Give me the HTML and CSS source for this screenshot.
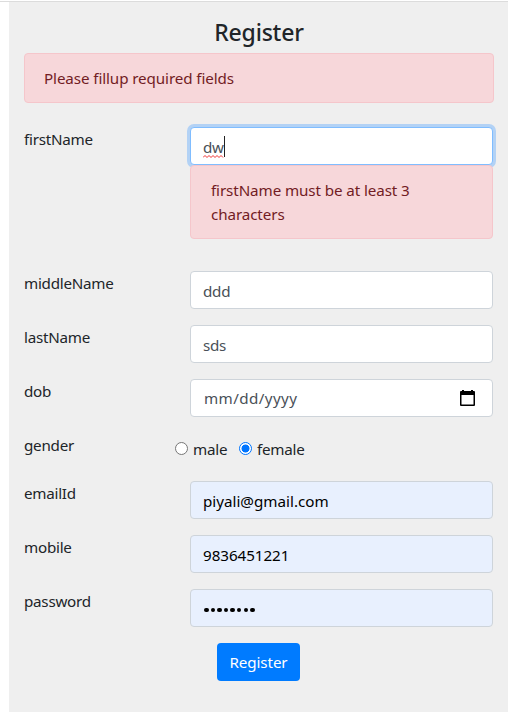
FILE: index.html
```html
<!DOCTYPE html>
<html lang="en">
<head>
<meta charset="utf-8">
<title>Register</title>
<link rel="stylesheet" href="styles.css">
</head>
<body>
<main class="panel">
  <h1 class="title"><span>Register</span></h1>
  <div class="alert"><span>Please fillup required fields</span></div>
  <form class="form">
    <div class="row row-error">
      <label class="label"><span>firstName</span></label>
      <div class="control">
        <div class="field focused"><span class="typed">dw<svg class="squiggle" width="21" height="3" viewBox="0 0 21 3"><path d="M0 2.5L2 .5L4 2.5L6 .5L8 2.5L10 .5L12 2.5L14 .5L16 2.5L18 .5L20 2.5" fill="none" stroke="#f03030" stroke-width="1"/></svg></span><i class="caret"></i></div>
        <div class="alert alert-field"><span>firstName must be at least 3 characters</span></div>
      </div>
    </div>
    <div class="row"><label class="label"><span>middleName</span></label><div class="field"><span>ddd</span></div></div>
    <div class="row"><label class="label"><span>lastName</span></label><div class="field"><span>sds</span></div></div>
    <div class="row"><label class="label"><span>dob</span></label>
      <div class="field date"><span class="date-text">mm/dd/yyyy</span>
        <svg class="calendar" width="15" height="17" viewBox="0 0 15 17"><path fill="#000" fill-rule="evenodd" d="M2 0h2v1h7V0h2v1h1q1 0 1 1v13q0 1-1 1H1q-1 0-1-1V2q0-1 1-1h1zM1.5 5v9.5h12V5z"/></svg>
      </div>
    </div>
    <div class="row row-gender"><label class="label"><span>gender</span></label>
      <div class="radios">
        <i class="radio"></i><span class="male">male</span>
        <i class="radio checked"></i><span class="female">female</span>
      </div>
    </div>
    <div class="row"><label class="label"><span>emailId</span></label><div class="field filled"><span class="email">piyali@gmail.com</span></div></div>
    <div class="row"><label class="label"><span>mobile</span></label><div class="field filled"><span class="phone">9836451221</span></div></div>
    <div class="row"><label class="label"><span>password</span></label><div class="field filled"><div class="dots"><i></i><i></i><i></i><i></i><i></i><i></i><i></i><i></i></div></div></div>
    <button class="submit" type="button"><span>Register</span></button>
  </form>
</main>
</body>
</html>
```
FILE: styles.css
```css
* { box-sizing: border-box; }
body {
  margin: 0;
  border-top: 1px solid #fff;
  background: #fff;
  color: #212529;
  font: 400 15.2px/24px "Noto Sans", "Open Sans", sans-serif;
  letter-spacing: -0.25px;
}
body::before { content: ""; display: block; height: 1px; background: #dcdcdc; }
.panel { margin-left: 9px; height: 710px; padding: 16px 14px 0 15px; background: #efefef; }
.title { margin: 0; height: 35px; line-height: 29px; font-size: 23px; font-weight: 500; text-align: center; letter-spacing: -0.2px; }
.alert { height: 50px; padding: 12px 19px; border: 1px solid #f5c6cb; border-radius: 4px; background: #f7d7da; color: #721c24; letter-spacing: -0.1px; }
.form { padding-top: 24px; }
.row { display: grid; grid-template-columns: 166px 303px; height: 38px; margin-bottom: 16px; }
.row-error { height: 112px; margin-bottom: 32px; }
.label { line-height: 25px; }
.field { display: flex; align-items: center; height: 38px; padding: 2px 12px 0 12px; border: 1px solid #ced4da; border-radius: 4px; background: #fff; color: #495057; }
.focused { position: relative; border-color: #80bdff; box-shadow: 0 0 0 3px #b3d2f5; }
.typed { position: relative; }
.squiggle { position: absolute; left: 0; bottom: 1px; }
.caret { width: 1px; height: 21px; margin-bottom: 2px; background: #222; }
.alert-field { position: relative; height: 74px; padding: 12px 20px; }
.date { padding: 0 17px 0 13px; justify-content: space-between; }
.date-text { letter-spacing: 0.4px; }
.row-gender { height: 32px; grid-template-columns: 151px 318px; }
.radios { display: flex; align-items: center; height: 32px; }
.radio { width: 13px; height: 13px; margin-bottom: 1px; border: 1px solid #767676; border-radius: 50%; background: #fff; }
.checked { border-color: #0075ff; background: radial-gradient(circle, #0075ff 0 3.7px, #fff 4.3px); }
.male { width: 46px; margin-left: 5px; }
.female { margin-left: 5px; }
.filled { background: #e8f0fe; color: #000; }
.email { letter-spacing: 0; }
.phone { letter-spacing: -0.05px; }
.dots { display: flex; gap: 2.1px; padding: 2px 0 0 1px; }
.dots i { width: 4.5px; height: 4.5px; border-radius: 50%; background: #000; }
.submit { display: block; width: 83px; height: 38px; margin-left: 193px; padding: 0; border: 0; border-radius: 4px; background: #007bff; color: #fff; font: inherit; letter-spacing: -0.1px; }
```
